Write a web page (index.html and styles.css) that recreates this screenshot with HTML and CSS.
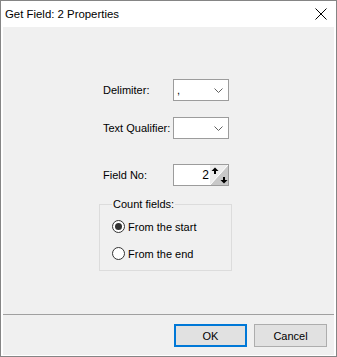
FILE: index.html
```html
<!DOCTYPE html>
<html>
<head>
<meta charset="utf-8">
<link rel="stylesheet" href="styles.css">
</head>
<body>
<div class="window">
  <div class="titlebar">
    <span class="title">Get Field: 2 Properties</span>
    <svg class="close" width="12" height="12" viewBox="0 0 12 12"><path d="M0.5 0.5 L11.5 11.5 M11.5 0.5 L0.5 11.5" stroke="#000" stroke-width="1" fill="none"/></svg>
  </div>
  <div class="client">
    <div class="main">
      <div class="row r1">
        <span class="label">Delimiter:</span>
        <div class="combo"><span class="val">,</span><svg class="chev" width="9" height="5" viewBox="0 0 9 5"><path d="M0.5 0.5 L4.5 4.5 L8.5 0.5" stroke="#606060" stroke-width="1" fill="none"/></svg></div>
      </div>
      <div class="row r2">
        <span class="label">Text Qualifier:</span>
        <div class="combo"><span class="val"></span><svg class="chev" width="9" height="5" viewBox="0 0 9 5"><path d="M0.5 0.5 L4.5 4.5 L8.5 0.5" stroke="#606060" stroke-width="1" fill="none"/></svg></div>
      </div>
      <div class="row r3">
        <span class="label">Field No:</span>
        <div class="spin">
          <span class="num">2</span>
          <svg class="spinbtn" width="18" height="20" viewBox="0 0 18 20">
            <polygon points="0,0 18,0 0,20" fill="#ededed"/>
            <polygon points="18,0 18,20 0,20" fill="#c8c8c8"/>
            <line x1="0" y1="20" x2="18" y2="0" stroke="#ffffff" stroke-width="1"/>
            <path d="M5 2.5 L8.5 6 L1.5 6 Z" fill="#000"/>
            <rect x="4" y="6" width="2" height="3" fill="#000"/>
            <path d="M14 18.5 L17.5 15 L10.5 15 Z" fill="#000"/>
            <rect x="13" y="12" width="2" height="3" fill="#000"/>
          </svg>
        </div>
      </div>
      <fieldset class="group">
        <legend>Count fields:</legend>
        <div class="radio"><span class="dot on"></span><span>From the start</span></div>
        <div class="radio"><span class="dot"></span><span>From the end</span></div>
      </fieldset>
    </div>
    <div class="footer">
      <button class="btn default">OK</button>
      <button class="btn">Cancel</button>
    </div>
  </div>
</div>
</body>
</html>
```
FILE: styles.css
```css
html, body {
  margin: 0;
  padding: 0;
  background: #ffffff;
}
body {
  font-family: "Liberation Sans", Arial, sans-serif;
  font-size: 11px;
  color: #000;
}
.window {
  width: 337px;
  height: 357px;
  box-sizing: border-box;
  border: 1px solid #858585;
  background: #ffffff;
  display: flex;
  flex-direction: column;
}
.titlebar {
  height: 26px;
  flex: none;
  display: flex;
  align-items: center;
  justify-content: space-between;
  padding: 0 9px 0 4px;
}
.title {
  font-size: 11.4px;
  color: #000;
}
.close {
  display: block;
}
.client {
  flex: 1;
  margin: 0 2px 1px 2px;
  background: #f0f0f0;
  display: flex;
  flex-direction: column;
}
.main {
  flex: 1;
  padding: 52px 0 0 100px;
}
.row {
  display: flex;
  align-items: center;
  height: 22px;
}
.r2 { margin-top: 16px; }
.r3 { margin-top: 25px; }
.label {
  width: 70px;
}
.combo {
  width: 56px;
  height: 22px;
  box-sizing: border-box;
  border: 1px solid #9c9c9c;
  background: #fff;
  display: flex;
  align-items: center;
  justify-content: space-between;
  padding: 0 5px 0 3px;
}
.val {
  font-size: 11px;
}
.chev { display: block; }
.spin {
  width: 56px;
  height: 22px;
  box-sizing: border-box;
  border: 1px solid #9c9c9c;
  background: #fff;
  display: flex;
  align-items: center;
}
.num {
  flex: 1;
  text-align: right;
  padding-right: 1px;
  font-size: 12px;
}
.spinbtn {
  display: block;
  flex: none;
}
.group {
  margin: 12px 0 0 -4px;
  width: 133px;
  box-sizing: border-box;
  border: 1px solid #dcdcdc;
  padding: 2px 0 3px 12px;
  min-width: 0;
}
.group legend {
  padding: 0 1px;
  line-height: 13px;
}
.radio {
  display: flex;
  align-items: center;
  height: 27px;
  gap: 3px;
}
.dot {
  width: 13px;
  height: 13px;
  box-sizing: border-box;
  border: 1px solid #333;
  border-radius: 50%;
  background: #fff;
  display: flex;
  align-items: center;
  justify-content: center;
}
.dot.on::after {
  content: "";
  width: 7px;
  height: 7px;
  border-radius: 50%;
  background: #333;
}
.footer {
  height: 41px;
  box-sizing: border-box;
  flex: none;
  border-top: 1px solid #a0a0a0;
  display: flex;
  justify-content: flex-end;
  align-items: flex-start;
  gap: 7px;
  padding: 9px 7px 0 0;
}
.btn {
  width: 73px;
  height: 23px;
  box-sizing: border-box;
  border: 1px solid #adadad;
  background: #e1e1e1;
  font-family: "Liberation Sans", Arial, sans-serif;
  font-size: 11px;
  color: #000;
  padding: 0;
  margin: 0;
}
.btn.default {
  border: 2px solid #0078d7;
}
```
